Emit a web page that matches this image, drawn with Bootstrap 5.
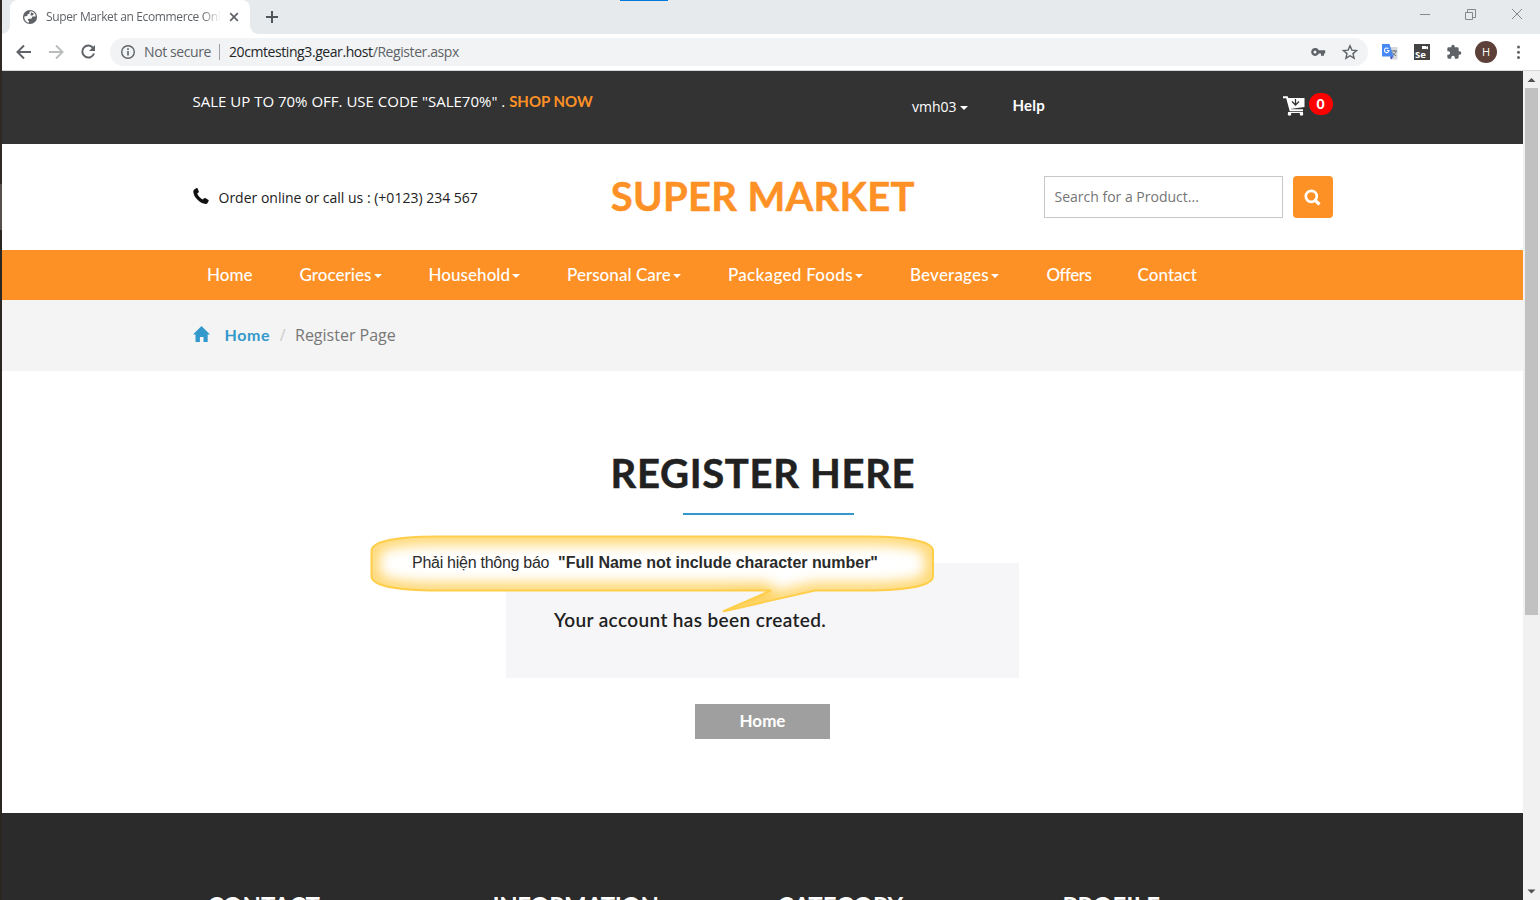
<!DOCTYPE html>
<html lang="en">
<head>
<meta charset="utf-8">
<title>Super Market an Ecommerce Online Shopping</title>
<link href="https://cdn.jsdelivr.net/npm/bootstrap@5.3.0/dist/css/bootstrap.min.css" rel="stylesheet">
<style>
html,body{height:100%;overflow:hidden}
body{font-family:"Open Sans",sans-serif;font-size:14px;line-height:20px;color:#212121;background:#fff}
svg{display:block;flex:none}
a{text-decoration:none;color:inherit}
.screen{height:900px;width:1540px}
.edge{width:2px;background:linear-gradient(#2e2924 0 184px,#55504d 184px 230px,#2a2622 230px)}
.ral{font-family:Lato,sans-serif}
.ws{white-space:nowrap}
/* browser chrome */
.tabs{height:34px;background:#e7eaed}
.tab-on{width:240px;margin-left:8px;background:#fff;border-radius:8px 8px 0 0;font-size:12px;color:#5f6368;padding:0 10px 0 12px}
.tab-on::before,.tab-on::after{content:"";position:absolute;bottom:0;width:8px;height:8px}
.tab-on::before{left:-8px;background:radial-gradient(circle at 0 0,transparent 7.5px,#fff 8px)}
.tab-on::after{right:-8px;background:radial-gradient(circle at 100% 0,transparent 7.5px,#fff 8px)}
.tab-title{width:176px;letter-spacing:-.36px;-webkit-mask-image:linear-gradient(90deg,#000 156px,transparent 175px);mask-image:linear-gradient(90deg,#000 156px,transparent 175px)}
.blueline{left:618px;top:0;width:48px;height:1px;background:#0078d7}
.bar{height:37px;border-bottom:1px solid #d5d8da;padding-left:13px}
.omni{width:1258px;height:28px;border-radius:14px;background:#f1f3f4;margin-left:11px;padding:0 10px 0 10px;color:#5f6368}
.omni i{width:1px;height:16px;background:#9aa0a6;margin:0 9px 0 8px}
.t-ns{letter-spacing:-.4px}
.t-url{letter-spacing:-.42px}
.avatar{width:22px;height:22px;border-radius:50%;background:#5d4037;color:#fff;font-size:11px}
/* scrollbar */
.sbar{width:17px;background:#f1f1f1}
.thumb{width:13px;height:527px;background:#c1c1c1}
/* site */
.wrap{width:1140px;margin-left:190.5px}
.top-strip{height:73px;background:#333;color:#fff}
.t-sale,.t-help{font-size:15px}
.t-help{letter-spacing:.2px}
.brandrow{height:106px}
.menu{height:50px;background:#fe9126;color:#fff}
.menu .wrap{display:grid;grid-template-columns:92.5px 129px 138.5px 161px 182px 136.5px 91px auto;padding:0 0 1px 14.5px;font-size:17px;font-weight:500;letter-spacing:.05px}
.menu .m5{letter-spacing:.3px}
.menu .m6{letter-spacing:.2px}
.menu .m7{letter-spacing:-.5px}
.car{display:inline-block;border:4px solid transparent;border-top-color:currentColor;border-bottom:0;vertical-align:middle;margin-left:2px}
.crumbs{height:71px;background:#f4f4f4;padding-bottom:2px}
.c1{letter-spacing:.6px}
.search-in{width:239px;height:42px;border:1px solid #c8c8c8;color:#757575;padding:0 10px;border-radius:0}
.search-go{width:40px;height:42px;background:#fe9126;border-radius:4px;margin-left:10px}
.main-area{height:442px;padding-top:80px}
.title{font-size:40px;line-height:44px;font-weight:700}
.t-brand{letter-spacing:.3px;-webkit-text-stroke:.5px currentColor}
.t-reg{letter-spacing:.68px;-webkit-text-stroke:.5px currentColor}
.rule{width:171px;height:2px;background:#3399cc;margin:18px 0 0 681px}
.panel{width:513px;height:115px;background:#f6f6f9;margin:48px 0 0 504px;padding:47px 0 0 48px}
.t-acc{font-size:19px;font-weight:600;letter-spacing:.37px}
.go-home{width:135px;height:35px;background:#9f9f9f;color:#fff;margin:26px 0 0 693px;padding-bottom:1px;font-size:17px;font-weight:700}
.callout{left:364px;top:530px;width:580px;height:90px}
.callout .words{left:48px;top:23px;font:16px/20px "Liberation Sans",Arial,sans-serif;color:#2b2b2b}
.v1{letter-spacing:-.27px}
.v2{letter-spacing:-.03px}
.foot{height:87px;background:#2b2b2b;color:#fff;font-size:24px;line-height:26px;font-weight:700}
.foot .wrap{display:grid;grid-template-columns:repeat(4,285px);padding:80px 0 0 15px}
.f2{letter-spacing:-.45px}
.f4{letter-spacing:.2px}
.count{width:24px;height:22px;border-radius:11px;background:red;font-weight:900;font-size:14px}
</style>
</head>
<body>
<div class="screen d-flex position-relative overflow-hidden">
 <div class="edge flex-shrink-0"></div>
 <div class="flex-grow-1 d-flex flex-column">
  <header class="position-relative">
   <div class="blueline position-absolute"></div>
   <div class="tabs d-flex">
    <div class="tab-on position-relative d-flex align-items-center">
     <svg width="16" height="16" viewBox="0 0 16 16"><circle cx="8" cy="8" r="7.1" fill="#5f6368"/><path d="M9 2.200c-1.500.4-1.800 1-1.500 1.800.2.600-.2 1-1 1-.8 0-1.100.5-1 1.300.1.700-.5 1-1.300.8L2.400 7.500C2 10.500 4 13.200 6.800 13.700c.4-.9.200-1.600-.5-2.200-.8-.7-.4-1.700.6-1.700h1.700c.9 0 1.400-.4 1.300-1.200-.1-.8.5-1.200 1.300-1.200h2.500C13.700 4.800 11.800 2.600 9 2.200z" fill="#fff"/><path d="M9 3.200l3 1.600-1.400 1.600H8.500z" fill="#5f6368"/></svg>
     <span class="tab-title ws overflow-hidden ms-2">Super Market an Ecommerce Onl</span>
     <svg class="ms-auto" width="12" height="12" viewBox="0 0 12 12"><path d="M2.200 2.200l7.600 7.600M9.800 2.200L2.200 9.800" stroke="#5f6368" stroke-width="1.700"/></svg>
    </div>
    <svg class="mt-2" style="margin-left:14px" width="16" height="17" viewBox="0 0 16 17"><path d="M8 3v12M2 9h12" stroke="#50555a" stroke-width="2"/></svg>
    <div class="ms-auto d-flex pt-2" style="padding-right:17px">
     <svg width="104" height="14" viewBox="0 0 104 14" fill="none" stroke="#858789"><path d="M1 6.500h10M46.500 4.500h7v7h-7zM48.500 4.500v-3h8v8h-3M93 1l10 10M103 1L93 11"/></svg>
    </div>
   </div>
   <div class="bar d-flex align-items-center">
    <svg width="84" height="18" viewBox="0 0 84 18" fill="none" stroke-width="2"><path d="M16 9H3M9 2.500L2.500 9 9 15.500" stroke="#5f6368"/><path d="M34 9h13M41 2.500L47.500 9 41 15.500" stroke="#babcbe"/><path d="M78.300 5.200A6 6 0 1 0 79 10.500" stroke="#5f6368"/><path d="M80 2v6h-6z" fill="#5f6368"/></svg>
    <div class="omni d-flex align-items-center">
     <svg width="16" height="16" viewBox="0 0 16 16"><circle cx="8" cy="8" r="6.300" fill="none" stroke="#5f6368" stroke-width="1.400"/><path d="M8 7v4.500M8 4.300v1.600" stroke="#5f6368" stroke-width="1.600"/></svg>
     <span class="ws ms-2 t-ns">Not secure</span><i></i><span class="ws t-url"><span class="text-dark">20cmtesting3.gear.host</span>/Register.aspx</span>
     <svg class="ms-auto" width="48" height="16" viewBox="0 0 48 16"><path d="M8.800 6.300a4 4 0 1 0 0 3.300H11v2.200h3V9.600h1.200V6.300zM5 9.500a1.500 1.500 0 1 1 0-3 1.500 1.500 0 0 1 0 3z" fill="#5f6368"/><path d="M40 1.800l1.900 4.300 4.700.4-3.600 3.100 1.100 4.600-4.100-2.500-4.100 2.500L37 9.600l-3.600-3.100 4.700-.4z" fill="none" stroke="#5f6368" stroke-width="1.400"/></svg>
    </div>
    <svg style="margin-left:14px" width="16" height="16" viewBox="0 0 16 16"><path d="M7 3h8.500v12.500H9z" fill="#d5d8dd"/><path d="M0 0h7.500l4 12.500H0z" fill="#4788f4"/><path d="M8 12.500h3.500L9 15.500z" fill="#3848b8"/><path d="M6.400 4.700A2.300 2.300 0 1 0 7 6.500H4.800" fill="none" stroke="#fff" stroke-width="1.100"/><path d="M9.500 7H15M12.200 6v1M14 7c-.5 2-1.800 3.500-3 4.200M10.500 8.500c.8 1.500 2 2.600 3.500 3.300" fill="none" stroke="#68737b"/></svg>
    <svg class="ms-3" width="16" height="16" viewBox="0 0 16 16"><rect width="16" height="16" fill="#444"/><path d="M8 2h4v1l2-1v3.500l-2-1v.500H8z" fill="#fff"/><text x="1" y="14" font-family="Open Sans" font-weight="700" font-size="9.500" fill="#fff">Se</text></svg>
    <svg class="ms-3" width="16" height="16" viewBox="0 0 24 24"><path fill="#5f6368" d="M20.500 11H19V7a2 2 0 0 0-2-2h-4V3.500a2.500 2.500 0 0 0-5 0V5H4a2 2 0 0 0-2 2v3.800h1.500a2.700 2.700 0 0 1 0 5.400H2V20a2 2 0 0 0 2 2h3.800v-1.500a2.700 2.700 0 0 1 5.400 0V22H17a2 2 0 0 0 2-2v-4h1.500a2.500 2.500 0 0 0 0-5z"/></svg>
    <span class="avatar d-flex align-items-center justify-content-center" style="margin-left:13px">H</span>
    <svg style="margin-left:19px" width="5" height="16" viewBox="0 0 5 16" fill="#5f6368"><circle cx="2.500" cy="3" r="1.500"/><circle cx="2.500" cy="8.200" r="1.500"/><circle cx="2.500" cy="13.400" r="1.500"/></svg>
   </div>
  </header>
  <div class="d-flex flex-grow-1">
   <main class="flex-grow-1">
    <div class="top-strip"><div class="wrap d-flex">
      <div class="ws t-sale" style="padding-top:20px;width:719.500px"><span>SALE UP TO 70% OFF. USE CODE "SALE70%" .</span> <a href="#" class="ral fw-bold t-shop" style="color:#fe9126">SHOP NOW</a></div>
      <div class="ws t-user" style="padding-top:26px;width:100.500px">vmh03<b class="car" style="margin-left:3px"></b></div>
      <div class="ral fw-bold t-help" style="padding-top:24px">Help</div>
      <div class="ms-auto d-flex" style="padding-top:22px">
       <svg style="margin-top:3px" width="24" height="20" viewBox="0 0 24 20"><path d="M1 1.200h4l3.500 13H21" fill="none" stroke="#fff" stroke-width="2"/><path d="M5 2h17.500v9L8 13z" fill="#fff"/><path d="M13.500 3v6M10 5.500l3.500 3.500 3.500-3.500" fill="none" stroke="#333" stroke-width="1.300"/><circle cx="7.500" cy="18" r="1.800" fill="#fff"/><circle cx="19.500" cy="18" r="1.800" fill="#fff"/><path d="M6 16.500h15" stroke="#fff"/></svg>
       <span class="count ral d-flex align-items-center justify-content-center" style="margin-left:3px">0</span>
      </div>
    </div></div>
    <div class="brandrow"><div class="wrap d-flex">
      <div class="d-flex" style="padding-top:44px;width:418.500px">
       <svg width="16" height="16" viewBox="0 0 16 16"><path d="M1.300 1.500L3.500 0c.5-.2.900 0 1.100.5l1.200 2.900c.2.500.1.800-.3 1.100l-1.300 1c.7 2.300 3.300 5.100 5.700 6l1.200-1.200c.3-.3.700-.4 1.100-.2l3 1.600c.500.300.6.700.4 1.200l-1 2c-.4.700-1 1-1.800 1C6.800 15.800 0 8.500.300 3.200c.1-.7.400-1.300 1-1.700z" fill="#111"/></svg>
       <span class="ws t-call" style="margin-left:10px">Order online or call us : (+0123) 234 567</span>
      </div>
      <div class="title ral ws t-brand" style="color:#fe9126;padding-top:30px;width:433px">SUPER MARKET</div>
      <form class="d-flex" style="padding-top:32px">
       <div class="search-in d-flex align-items-center ws t-search">Search for a Product...</div>
       <div class="search-go d-flex align-items-center justify-content-center"><svg width="17" height="17" viewBox="0 0 17 17" fill="none" stroke="#fff"><circle cx="7.300" cy="7.300" r="5.500" stroke-width="2.700"/><path d="M11.300 11.300l4.200 4.200" stroke-width="3.200"/></svg></div>
      </form>
    </div></div>
    <nav class="menu ral d-flex align-items-center"><div class="wrap ws">
      <a href="#" class="m1">Home</a><a href="#"><span class="m2">Groceries</span><b class="car"></b></a><a href="#"><span class="m3">Household</span><b class="car"></b></a><a href="#"><span class="m4">Personal Care</span><b class="car"></b></a><a href="#"><span class="m5">Packaged Foods</span><b class="car"></b></a><a href="#"><span class="m6">Beverages</span><b class="car"></b></a><a href="#" class="m7">Offers</a><a href="#" class="m8">Contact</a>
    </div></nav>
    <div class="crumbs d-flex align-items-center"><div class="wrap d-flex ws" style="font-size:16px">
      <svg style="width:17px;margin-right:15px;margin-top:1px" height="16" viewBox="0 0 17 16"><path d="M8.500 0L17 8.600h-2.300V16h-4.200v-5h-3.600v5H2.500V8.600H0z" fill="#3399cc"/></svg>
      <a href="#" class="ral fw-bold c1" style="color:#3399cc">Home</a><span style="color:#ccc;margin:0 9.500px">/</span><span class="c2" style="color:#777">Register Page</span>
    </div></div>
    <section class="main-area">
      <h1 class="title ral ws mb-0 t-reg" style="margin-left:608.500px">REGISTER HERE</h1>
      <div class="rule"></div>
      <div class="panel ral ws"><span class="t-acc">Your account has been created.</span></div>
      <a href="#" class="go-home ral d-flex align-items-center justify-content-center">Home</a>
    </section>
    <footer class="foot ral overflow-hidden"><div class="wrap"><span class="f1">CONTACT</span><span class="f2">INFORMATION</span><span class="f3">CATEGORY</span><span class="f4">PROFILE</span></div></footer>
   </main>
   <aside class="sbar flex-shrink-0 d-flex flex-column align-items-center">
    <svg width="9" height="17" viewBox="0 0 9 17"><path d="M.500 11L4.500 7l4 4z" fill="#505050"/></svg>
    <div class="thumb"></div>
    <svg class="mt-auto" width="9" height="17" viewBox="0 0 9 17"><path d="M.500 6.500h8l-4 4z" fill="#505050"/></svg>
   </aside>
  </div>
 </div>
 <div class="callout position-absolute">
  <svg class="position-absolute" width="580" height="90" viewBox="364 530 580 90">
   <defs><path id="bubble" d="M371.500 551C371.500 541 398 536.500 438 536.500H865C905 536.500 933 541 933 551V576C933 586 905 590.500 865 590.500H815L723 611.500 771 590.500H438C398 590.500 371.500 586 371.500 576Z"/><clipPath id="inside"><use href="#bubble"/></clipPath><filter id="soft" filterUnits="userSpaceOnUse" x="340" y="505" width="630" height="135" color-interpolation-filters="sRGB"><feGaussianBlur stdDeviation="7"/></filter></defs>
   <use href="#bubble" fill="#fff"/>
   <g clip-path="url(#inside)"><use href="#bubble" fill="none" stroke="#ffd058" stroke-width="14" filter="url(#soft)"/></g>
   <use href="#bubble" fill="none" stroke="#ffce4a" stroke-width="2"/>
  </svg>
  <div class="words position-absolute ws"><span class="v1">Phải hiện thông báo</span>&nbsp; <b class="v2">"Full Name not include character number"</b></div>
 </div>
</div>
<script src="https://cdn.jsdelivr.net/npm/bootstrap@5.3.0/dist/js/bootstrap.bundle.min.js"></script>
</body>
</html>
